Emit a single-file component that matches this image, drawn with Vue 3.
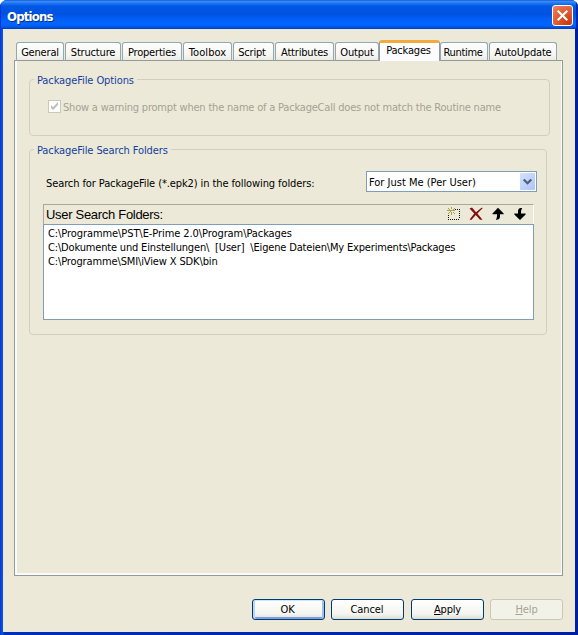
<script setup>
import { ref } from 'vue'

const tabs = ['General', 'Structure', 'Properties', 'Toolbox', 'Script', 'Attributes', 'Output', 'Packages', 'Runtime', 'AutoUpdate']
const active = ref('Packages')
const folders = [
  'C:\\Programme\\PST\\E-Prime 2.0\\Program\\Packages',
  'C:\\Dokumente und Einstellungen\\  [User]  \\Eigene Dateien\\My Experiments\\Packages',
  'C:\\Programme\\SMI\\iView X SDK\\bin',
]
</script>

<template>
  <div class="window">
    <header class="titlebar">
      <span class="title">Options</span>
      <button class="close" aria-label="Close">
        <svg width="19" height="19" viewBox="0 0 19 19"><path d="M4.7 4.7L14.3 14.3M14.3 4.7L4.7 14.3" stroke="#fff" stroke-width="2.1" /></svg>
      </button>
    </header>
    <main class="body">
      <nav class="tabs">
        <button v-for="t in tabs" :key="t" class="tab" :class="[t.toLowerCase(), { active: t === active }]" @click="active = t"><span>{{ t }}</span></button>
      </nav>
      <section class="panel">
        <div class="group first">
          <div class="legend"><span class="l1">PackageFile Options</span></div>
          <label class="check">
            <svg width="13" height="13" viewBox="0 0 13 13"><rect x=".5" y=".5" width="12" height="12" fill="#fff" stroke="#cac8bb" /><path d="M3 5v3l2 2 5-5V2L5 7z" fill="#c1bfb2" /></svg>
            <span class="warn">Show a warning prompt when the name of a PackageCall does not match the Routine name</span>
          </label>
        </div>
        <div class="group second">
          <div class="legend"><span class="l2">PackageFile Search Folders</span></div>
          <div class="scope">
            <span class="find">Search for PackageFile (*.epk2) in the following folders:</span>
            <div class="select">
              <span class="value">For Just Me (Per User)</span>
              <i class="drop"><svg width="15" height="17" viewBox="0 0 15 17"><path d="M3.7 6.5L7.5 10.2L11.3 6.5" fill="none" stroke="#4d6185" stroke-width="2.3" /></svg></i>
            </div>
          </div>
          <div class="toolbar">
            <span class="caption">User Search Folders:</span>
            <div class="tools">
              <svg width="14" height="14" viewBox="0 0 14 14" shape-rendering="crispEdges">
                <path d="M8 2h1v1h-1zM10 2h1v1h-1zM12 2h1v1h-1zM12 4h1v1h-1zM12 6h1v1h-1zM12 8h1v1h-1zM12 10h1v1h-1zM1 8h1v1h-1zM1 10h1v1h-1zM1 12h1v1h-1zM3 12h1v1h-1zM5 12h1v1h-1zM7 12h1v1h-1zM9 12h1v1h-1zM11 12h1v1h-1z" fill="#111" />
                <path d="M4 0h1v2h-1zM4 5h1v3h-1zM0 3h3v1h-3zM6 3h2v1h-2zM1 1h1v1h-1zM2 2h1v1h-1zM7 1h1v1h-1zM6 2h1v1h-1zM3 3h3v1h-3zM3 4h1v1h-1zM2 5h1v1h-1zM1 6h1v1h-1zM6 5h1v1h-1zM7 6h1v1h-1z" fill="#a5a04a" />
              </svg>
              <svg width="14" height="14" viewBox="0 0 14 14"><path d="M.5 1.5L3 .6L7 5.3L12.5 .8L13.8 1.1L8.4 6.6L13.5 12.8H11L6.8 8.1L2.3 13L.6 12.4L5.3 6.6Z" fill="#800d0b" /></svg>
              <svg width="14" height="14" viewBox="0 0 14 14"><path d="M7 .8L12.7 6.5V7.2H9V10Q8.8 12.5 6 12.7H4.8Q6 11 6 9V7.2H1.5V6.5Z" fill="#000" /></svg>
              <svg width="14" height="14" viewBox="0 0 14 14"><path d="M7 13L1.3 7.5V6.6H5V4Q5.2 1.2 8 1H9.2Q8 2.8 8 5V6.6H12.6V7.5Z" fill="#000" /></svg>
            </div>
          </div>
          <ul class="list">
            <li v-for="(f, i) in folders" :key="f" :class="'row' + i">{{ f }}</li>
          </ul>
        </div>
      </section>
      <footer class="actions">
        <button class="btn default">OK</button>
        <button class="btn cancel">Cancel</button>
        <button class="btn apply"><span><u>A</u>pply</span></button>
        <button class="btn" disabled><span><u>H</u>elp</span></button>
      </footer>
    </main>
  </div>
</template>

<style>
body { background: #fff; overflow: hidden; }
</style>

<style scoped>
* { box-sizing: border-box; }
button { font: inherit; padding: 0; margin: 0; letter-spacing: inherit; }
svg { display: block; flex: none; }
.window {
  width: 578px; height: 635px; padding: 0 3px 3px; display: flex; flex-direction: column;
  border-radius: 7px 7px 0 0; white-space: pre; overflow: hidden;
  background: linear-gradient(90deg, #0831d9 0, #0855dd 2px, #0855dd 3px, #0030b8 4px, #001ea0 100%);
  font: 11px/14px "DejaVu Sans Condensed", "DejaVu Sans", sans-serif; color: #000; letter-spacing: -.1px;
}
.titlebar {
  height: 29px; margin: 0 -3px; padding: 4px 5px 0 7px; display: flex; justify-content: space-between; align-items: flex-start; flex: none;
  background: linear-gradient(#0842c4 0, #3c91fb 1px, #2479f2 3px, #0058e4 6px, #0053df 14px, #0060f9 20px, #0066ff 24px, #0057e8 27px, #0036bd 29px);
  box-shadow: inset 1px 0 #0831d9, inset -2px 0 #0428ad;
}
.title { font: bold 13px/25px "DejaVu Sans Condensed", sans-serif; letter-spacing: -.8px; color: #fff; text-shadow: 1px 1px #0a3188; }
.close { width: 21px; height: 21px; margin-top: 1px; border: 1px solid #fff; border-radius: 3px; background: radial-gradient(circle at 80% 90%, #c83a0c, #e5643d 65%, #e88a6e); display: grid; place-items: center; }
.body { flex: 1; background: #ece9d8; padding: 11px 12px 0 11px; display: flex; flex-direction: column; }
.tabs { height: 21px; display: flex; align-items: flex-end; padding-left: 2px; gap: 1px; flex: none; z-index: 1; }
.tab { height: 19px; border: 1px solid #91a7b4; border-bottom-color: #919b9c; border-radius: 3px 3px 0 0; background: linear-gradient(#fff, #f6f5f0 70%, #ecebe2); display: flex; justify-content: center; flex: none; line-height: 19px; letter-spacing: -.18px; }
.general { width: 48px; } .structure { width: 56px; } .properties { width: 60px; } .toolbox { width: 49px; } .script { width: 41px; }
.attributes { width: 59px; } .output { width: 44px; } .packages { width: 61px; } .runtime { width: 48px; } .autoupdate { width: 68px; }
.tab.toolbox { letter-spacing: .1px; }
.tab.script { padding-right: 3px; }
.tab.runtime { padding-right: 2px; letter-spacing: -.3px; }
.tab.active { height: 21px; margin: 0 -1px; border: solid #919b9c; border-width: 0 1px; border-top: 3px solid #f0ab3d; background: #fcfcfe; line-height: 15px; padding-right: 2px; }
.panel { height: 516px; flex: none; margin-top: -1px; border: 1px solid #919b9c; box-shadow: inset 2px 0 #fbfbf9, inset -1px -2px #fbfbf9; padding: 18px 12px 0 14px; }
.group { border: 1px solid #d0d0bf; border-radius: 4px; }
.first { height: 57px; }
.second { height: 186px; width: 518px; margin-top: 13px; padding-right: 12px; }
.legend { height: 14px; line-height: 16px; margin: -7px 0 0 4px; color: #13429c; }
.legend span { display: inline-block; padding: 0 3px; background: #ece9d8; }
.check { display: flex; gap: 2px; align-items: flex-start; padding: 13px 0 0 18px; color: #a5a293; line-height: 15px; }
.warn { letter-spacing: -.2px; }
.scope { display: flex; justify-content: space-between; height: 21px; margin: 14px -3px 0 16px; }
.find { padding-top: 6px; }
.select { width: 171px; height: 21px; border: 1px solid #7f9db9; background: #fff; display: flex; justify-content: space-between; align-items: center; padding: 1px 1px 1px 2px; letter-spacing: 0; }
.value { padding-top: 2px; }
.drop { width: 15px; height: 17px; border-radius: 1px; background: linear-gradient(135deg, #d5e1fd, #aec5f5); }
.toolbar { height: 20px; margin: 12px 0 0 13px; border: 1px solid #aaa899; border-width: 1px 0 0 1px; border-right: 1px solid #fff; display: flex; justify-content: space-between; align-items: flex-start; padding: 0 6px 0 2px; }
.caption { font: 13px/19px "Liberation Sans", Arial, sans-serif; letter-spacing: -.3px; }
.tools { display: flex; gap: 8px; padding-top: 2px; }
.list { height: 96px; margin: 0 0 0 13px; padding: 2px 4px; list-style: none; border: 1px solid #7f9db9; background: #fff; }
.row0 { letter-spacing: -.08px; } .row1 { letter-spacing: -.17px; } .row2 { letter-spacing: -.13px; }
.actions { display: flex; padding: 23px 0 0 238px; gap: 6px; }
.btn { width: 73px; height: 21px; border: 1px solid #003c74; border-radius: 3px; background: linear-gradient(#fff, #f4f4ef 75%, #dedbd2); line-height: 20px; text-align: center; }
.btn.default { box-shadow: inset 0 1px #cee7ff, inset 2px 0 #bcd4f6, inset -2px 0 #a0bff0, inset 0 -2px #7d9fe0; padding-right: 2px; }
.cancel { padding-right: 1px; }
.apply { margin-left: 1px; letter-spacing: -.2px; }
.btn:disabled { border-color: #c9c7ba; background: #f3f2e9; color: #a5a293; }
</style>
